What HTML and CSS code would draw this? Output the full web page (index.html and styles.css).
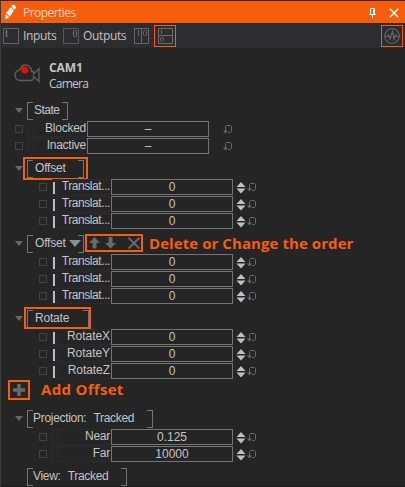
FILE: index.html
```html
<!DOCTYPE html>
<html lang="en">
<head>
<meta charset="utf-8">
<title>Properties</title>
<link rel="stylesheet" href="styles.css">
</head>
<body>
<svg width="0" height="0" class="defs">
  <symbol id="spin" viewBox="0 0 10 12"><path d="M5 0L9.500 5H.5ZM.5 6.500h9L5 11.500Z" fill="#bfbfc5"/></symbol>
  <symbol id="reset" viewBox="0 0 10 10"><path d="M2.500 6V1.500L3.500 .5H7.500L8.500 1.500V6.500L7.500 7.500H5" fill="none" stroke="#68686b"/><path d="M0 5.500H5L2.500 8.500Z" fill="#68686b"/></symbol>
  <symbol id="tri" viewBox="0 0 8 5"><path d="M0 0H8L4 5Z" fill="#68686c"/></symbol>
</svg>
<div class="panel">
  <header class="title">
    <svg class="pencil" width="12" height="17" viewBox="0 0 12 17"><path d="M6.500 2L8 .8Q9 .3 10 1.500L11 3.200Q11.300 4 10.500 4.500L9 5.500Z" fill="#fff"/><path d="M5.700 3L8.800 6.500L5 12.500L1 9Z" fill="#fff"/><path d="M.8 10.200L4.200 13.200L.5 15.500Z" fill="#fff"/><path d="M3 8.500L5.500 5M4.800 10L7.200 6.500" stroke="#ffc09a" stroke-width=".6"/></svg>
    <span class="title-text">Properties</span>
    <svg class="pin" width="7" height="10" viewBox="0 0 7 10"><path d="M1.500 6V.5H5.500V6M4.500 0V6M0 6.500H7M3.500 7V10" fill="none" stroke="#fff"/></svg>
    <svg class="close" width="10" height="10" viewBox="0 0 10 10"><path d="M.8.8L9.200 9.200M9.200.8L.8 9.200" stroke="#fff" stroke-width="1.500"/></svg>
  </header>
  <nav class="toolbar">
    <svg width="16" height="16" viewBox="0 0 16 16"><path d="M.5.500H15.500V15.500H.5Z" fill="none" stroke="#656567"/><path d="M3.500 2V9" stroke="#77777a" stroke-width="1.500"/></svg>
    <span class="tool inputs">Inputs</span>
    <svg width="16" height="16" viewBox="0 0 16 16"><path d="M.5.500H15.500V15.500H.5Z" fill="none" stroke="#58585a"/><rect x="10.500" y="2.500" width="3" height="6" rx="1" fill="none" stroke="#77777a"/></svg>
    <span class="tool outputs">Outputs</span>
    <svg width="15" height="16" viewBox="0 0 15 16"><path d="M.5.500H14.500V15.500H.5ZM7.500 0V16M4.500 2V8" fill="none" stroke="#656567"/><rect x="9.500" y="2.500" width="3" height="5" rx="1" fill="none" stroke="#656567"/></svg>
    <span class="mark split"><svg width="15" height="16" viewBox="0 0 15 16"><path d="M.5.500H14.500V15.500H.5ZM0 7.500H15M3.500 2V6" fill="none" stroke="#6c6c6e"/><rect x="2.500" y="9.500" width="3" height="4" rx="1" fill="none" stroke="#6c6c6e"/></svg></span>
    <span class="mark activity"><svg width="16" height="16" viewBox="0 0 16 16"><circle cx="8" cy="8" r="7.300" fill="none" stroke="#606062" stroke-width="1.300"/><path d="M1 8.500H3.500L4.500 7L6 11L8.500 3.500L10 11L11.500 7L12.500 8.500H15" fill="none" stroke="#68686a" stroke-width="1.200"/></svg></span>
  </nav>
  <section class="object">
    <svg width="27" height="19" viewBox="0 0 27 19"><path d="M6 6C7 2.800 9 1 11.500 1C15 1 17.500 3.500 17.500 7.500H19.500V10L25 4.500V17.500L19.500 12.500V14.500Q19 16.500 17 16.500H6Q1 16 1 11Q1 7 6 6" fill="none" stroke="#606062" stroke-width="1.300"/><circle cx="11" cy="6" r="3.600" fill="#f50505"/></svg>
    <div class="names"><b>CAM1</b><span>Camera</span></div>
  </section>

  <section class="group state">
    <h2 class="head"><svg class="tri"><use href="#tri"/></svg><span class="bracket w-state">State</span></h2>
    <div class="row"><i class="box"></i><label>Blocked</label><output>–</output><svg class="reset"><use href="#reset"/></svg></div>
    <div class="row"><i class="box"></i><label>Inactive</label><output>–</output><svg class="reset"><use href="#reset"/></svg></div>
  </section>

  <section class="group offset-a">
    <h2 class="head"><svg class="tri"><use href="#tri"/></svg><span class="bracket w-offset">Offset</span><i class="outline o-offset"></i></h2>
    <div class="row sub key tight"><i class="box"></i><label>Translat...</label><output>0</output><svg class="spin"><use href="#spin"/></svg><svg class="reset"><use href="#reset"/></svg></div>
    <div class="row sub key tight"><i class="box"></i><label>Translat...</label><output>0</output><svg class="spin"><use href="#spin"/></svg><svg class="reset"><use href="#reset"/></svg></div>
    <div class="row sub key tight"><i class="box"></i><label>Translat...</label><output>0</output><svg class="spin"><use href="#spin"/></svg><svg class="reset"><use href="#reset"/></svg></div>
  </section>

  <section class="group offset-b">
    <h2 class="head"><svg class="tri"><use href="#tri"/></svg><span class="bracket w-offset">Offset<svg class="drop" width="12" height="7" viewBox="0 0 12 7"><path d="M0 0H12L6 7Z" fill="#8e8e91"/></svg></span>
      <span class="actions">
        <svg width="51" height="12" viewBox="0 0 51 12"><path d="M5.500 0L11 6H7.500V11.500H3.500V6H0ZM19.500 0H23.500V6H27L21.500 11.500L16 6H19.500Z" fill="#69696b"/><path d="M39.500.800L50.500 11.500M50.500.800L39.500 11.500" stroke="#69696b" stroke-width="1.900"/></svg>
      </span>
      <strong class="note order">Delete or Change the order</strong>
    </h2>
    <div class="row sub key tight"><i class="box"></i><label>Translat...</label><output>0</output><svg class="spin"><use href="#spin"/></svg><svg class="reset"><use href="#reset"/></svg></div>
    <div class="row sub key tight"><i class="box"></i><label>Translat...</label><output>0</output><svg class="spin"><use href="#spin"/></svg><svg class="reset"><use href="#reset"/></svg></div>
    <div class="row sub key tight"><i class="box"></i><label>Translat...</label><output>0</output><svg class="spin"><use href="#spin"/></svg><svg class="reset"><use href="#reset"/></svg></div>
  </section>

  <section class="group rotate">
    <h2 class="head"><svg class="tri"><use href="#tri"/></svg><span class="bracket w-rotate">Rotate</span><i class="outline o-rotate"></i></h2>
    <div class="row sub key"><i class="box"></i><label>RotateX</label><output>0</output><svg class="spin"><use href="#spin"/></svg><svg class="reset"><use href="#reset"/></svg></div>
    <div class="row sub key"><i class="box"></i><label>RotateY</label><output>0</output><svg class="spin"><use href="#spin"/></svg><svg class="reset"><use href="#reset"/></svg></div>
    <div class="row sub key"><i class="box"></i><label>RotateZ</label><output>0</output><svg class="spin"><use href="#spin"/></svg><svg class="reset"><use href="#reset"/></svg></div>
  </section>

  <div class="add">
    <span class="plus"><svg width="12" height="12" viewBox="0 0 12 12"><path d="M6 0V12M0 6H12" stroke="#69696b" stroke-width="3.500"/></svg></span>
    <strong class="note">Add Offset</strong>
  </div>

  <section class="group projection">
    <h2 class="head"><svg class="tri"><use href="#tri"/></svg><span class="bracket w-projection"><span>Projection:</span><span class="value">Tracked</span></span></h2>
    <div class="row sub"><i class="box"></i><label>Near</label><output>0.125</output><svg class="spin"><use href="#spin"/></svg><svg class="reset"><use href="#reset"/></svg></div>
    <div class="row sub"><i class="box"></i><label>Far</label><output>10000</output><svg class="spin"><use href="#spin"/></svg><svg class="reset"><use href="#reset"/></svg></div>
  </section>
  <section class="group view">
    <h2 class="head"><span class="bracket w-view"><span>View:</span><span class="value">Tracked</span></span></h2>
  </section>
</div>
</body>
</html>
```
FILE: styles.css
```css
* { box-sizing: border-box; }
body { margin: 0; background: #252525; overflow: hidden; }
.defs { position: absolute; }
svg { display: block; flex: none; }
.panel {
  height: 487px;
  border-top: 1px solid #2d2d30;
  border-left: 1px solid #3b3b3d;
  border-bottom: 1px solid #1b1b1b;
  font: 12px/16px "Liberation Sans", sans-serif;
  color: #c4c4c4;
}
.title {
  height: 22px;
  display: flex;
  align-items: center;
  padding: 0 6px 0 4px;
  background: #f85e0a;
}
.title-text {
  flex: 1;
  margin: 1px 0 0 6px;
  font: 12px/16px "Open Sans", sans-serif;
  letter-spacing: -.55px;
  color: #fbd6c4;
}
.pin { margin: 2px 13px 0 0; }
.close { margin-top: 2px; }
.toolbar {
  height: 25px;
  display: flex;
  align-items: center;
  padding: 0 2px;
  background: #2d2d30;
}
.tool {
  font: 12px/16px "Open Sans", sans-serif;
  letter-spacing: -.35px;
  color: #c2c2c4;
}
.inputs { width: 44px; padding-left: 4px; }
.outputs { width: 55px; padding-left: 4px; white-space: nowrap; }
.mark {
  width: 22px;
  height: 22px;
  display: grid;
  place-items: center;
  border: 1px solid #f65d0c;
}
.split { margin-left: 5px; }
.activity { margin-left: auto; margin-right: 0; }
.object {
  height: 54px;
  display: flex;
  padding: 13px 0 0 13px;
}
.object > svg { margin-top: 3px; }
.names {
  display: flex;
  flex-direction: column;
  margin: -1px 0 0 8px;
  font: 12px/16px "Open Sans", sans-serif;
  letter-spacing: -.75px;
}
.names b { font-size: 12px; letter-spacing: -.1px; }
.head {
  position: relative;
  height: 16px;
  display: flex;
  align-items: center;
  margin: 0;
  padding-left: 14px;
  font-size: 12px;
  font-weight: normal;
}
.tri { width: 8px; height: 5px; margin-right: 4px; }
.bracket {
  position: relative;
  height: 16px;
  display: flex;
  align-items: center;
  padding: 0 0 1px 8px;
  letter-spacing: -.2px;
}
.bracket::before,
.bracket::after {
  content: "";
  position: absolute;
  top: 0;
  width: 5px;
  height: 16px;
  border: 1px solid #747476;
}
.bracket::before { left: 0; border-right: 0; }
.bracket::after { right: 0; border-left: 0; }
.w-state { width: 41px; padding-left: 7px; letter-spacing: -.5px; }
.w-offset { width: 57px; }
.w-rotate { width: 62px; }
.w-projection { width: 126px; padding-left: 6px; letter-spacing: -.3px; }
.w-view { width: 100px; padding-left: 6px; letter-spacing: -.3px; }
.value { margin-left: 7px; }
.drop { margin: 2px 0 0 3px; }
.outline { position: absolute; border: 2px solid #f65d0c; }
.o-offset { left: 22px; top: -3px; width: 65px; height: 23px; }
.o-rotate { left: 23px; top: -3px; width: 67px; height: 22px; }
.actions {
  width: 58px;
  height: 18px;
  display: grid;
  place-items: center;
  margin-left: 1px;
  border: 2px solid #f65d0c;
}
.note {
  font: bold 15px/18px "Open Sans", sans-serif;
  letter-spacing: .07px;
  color: #f65d0c;
  white-space: nowrap;
}
.order { margin-left: 6px; }
.add .note { letter-spacing: .3px; margin-top: -2px; }
.group .row:nth-of-type(1) { margin-top: 3px; }
.row { height: 17px; display: flex; padding-left: 14px; }
.sub { padding-left: 38px; }
.box { width: 8px; height: 8px; margin: 4px 5px 0 0; border: 1px solid #434345; }
.row label {
  position: relative;
  width: 59px;
  height: 16px;
  padding-right: 1px;
  line-height: 12px;
  text-align: right;
  letter-spacing: -.25px;
  white-space: nowrap;
  border: 1px solid #2b2b2d;
  border-right: 0;
}
.tight label { letter-spacing: -.42px; }
.rotate label { letter-spacing: -.05px; }
.row label::before {
  content: "";
  position: absolute;
  left: 4px;
  top: -1px;
  width: 1px;
  height: 16px;
  background: #2b2b2d;
}
.key label::after {
  content: "";
  position: absolute;
  left: 0;
  top: 2px;
  width: 2px;
  height: 12px;
  background: #bebec2;
}
.row output {
  width: 122px;
  height: 16px;
  line-height: 14px;
  text-align: center;
  border: 1px solid #747476;
}
.spin { width: 10px; height: 12px; margin: 3px 0 0 3px; }
.reset { width: 10px; height: 10px; margin: 4px 0 0 1px; }
.state .reset { margin-left: 14px; }
.offset-a, .offset-b, .rotate { margin-top: 5px; }
.add { height: 20px; display: flex; align-items: center; padding-left: 7px; }
.plus {
  width: 22px;
  height: 20px;
  display: grid;
  place-items: center;
  margin-right: 11px;
  border: 2px solid #f65d0c;
}
.projection { margin-top: 10px; }
.view { margin-top: 5px; }
.view .head { padding-left: 26px; }
```
